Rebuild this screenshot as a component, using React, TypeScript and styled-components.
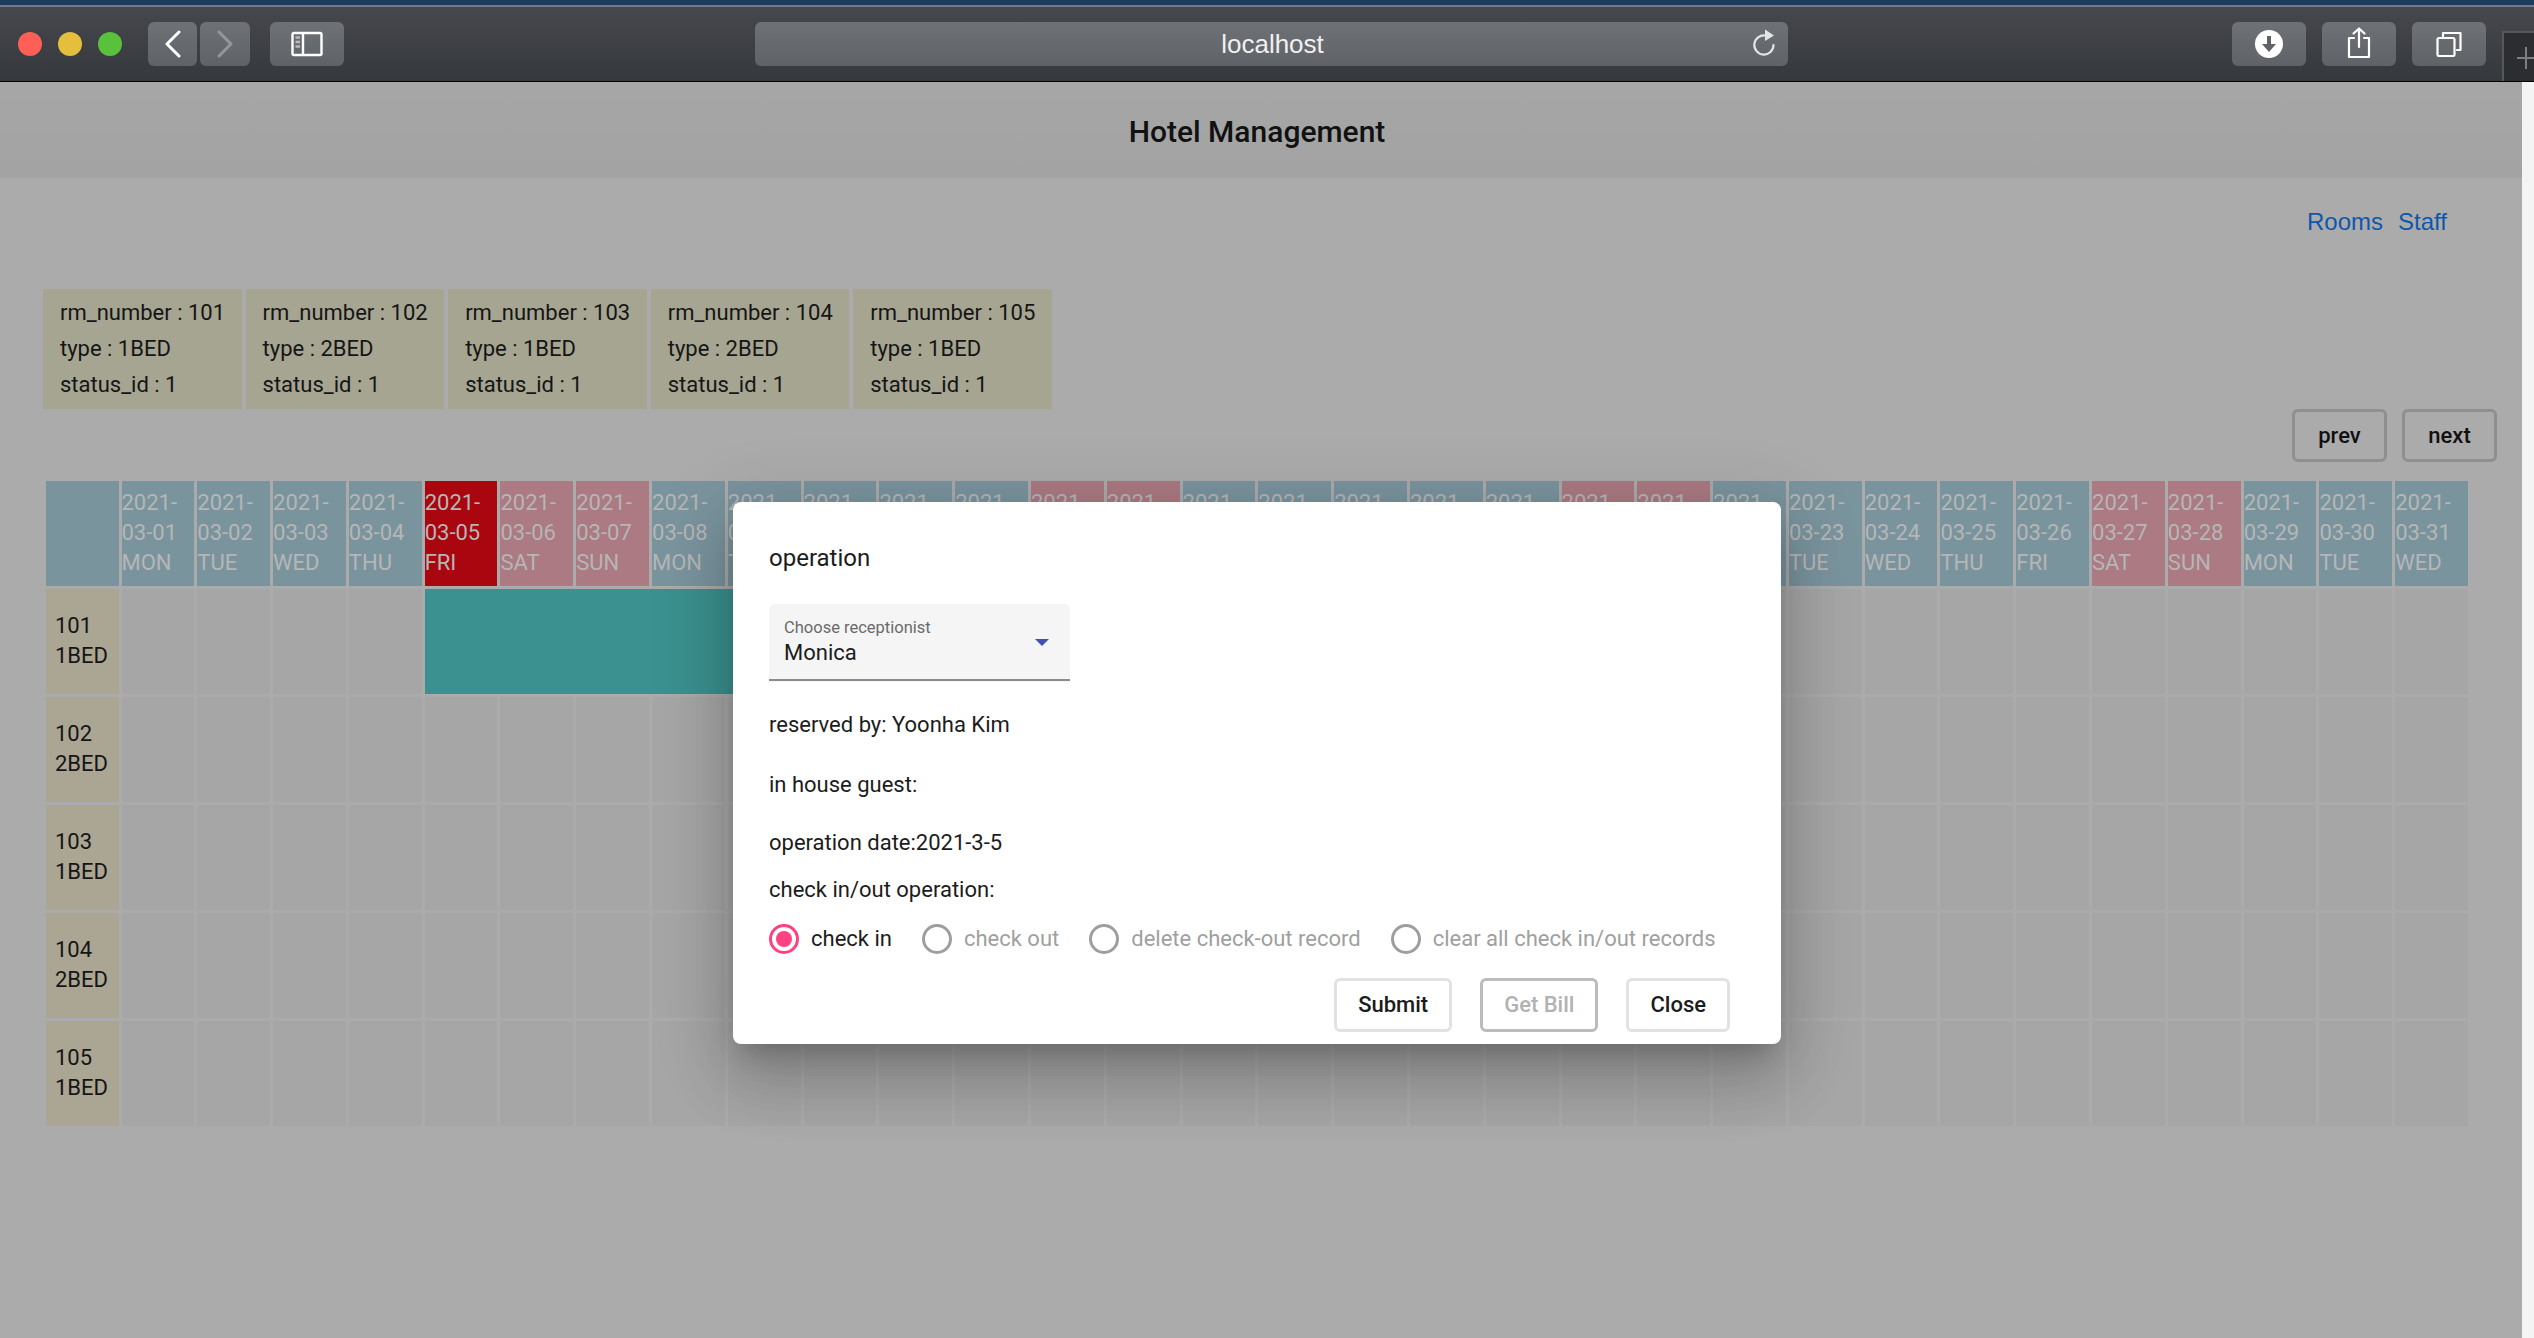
import styled, { createGlobalStyle } from 'styled-components';

const GlobalStyle = createGlobalStyle`
    html, body {
        margin: 0;
        padding: 0;
        background: #f4f4f4;
        overflow: hidden;
    }
    * {
        box-sizing: border-box;
    }
`;

const rooms = [
    { number: 101, type: '1BED' },
    { number: 102, type: '2BED' },
    { number: 103, type: '1BED' },
    { number: 104, type: '2BED' },
    { number: 105, type: '1BED' },
];

const weekdays = ['MON', 'TUE', 'WED', 'THU', 'FRI', 'SAT', 'SUN'];

const days = Array.from({ length: 31 }, (_, i) => {
    const day = i + 1;
    const name = weekdays[i % 7];
    return {
        date: `03-${String(day).padStart(2, '0')}`,
        name,
        kind: day === 5 ? 'today' : name === 'SAT' || name === 'SUN' ? 'weekend' : 'weekday',
    };
});

const radios = [
    { label: 'check in', checked: true },
    { label: 'check out', checked: false },
    { label: 'delete check-out record', checked: false },
    { label: 'clear all check in/out records', checked: false },
];

const dayColors: Record<string, string> = {
    today: '#aa0610',
    weekend: '#ab7a82',
    weekday: '#7a949e',
};

export default function App() {
    return (
        <Page>
            <GlobalStyle />
            <TopStrip />
            <Toolbar>
                <Lights>
                    <Light $color="#ff5f57" />
                    <Light $color="#e5bf3c" />
                    <Light $color="#5ac13c" />
                </Lights>
                <NavGroup>
                    <ToolButton $width={49}>
                        <svg width="20" height="28" viewBox="0 0 20 28" fill="none" stroke="#fff" strokeWidth="3" strokeLinecap="round" strokeLinejoin="round">
                            <path d="M16 2 L4 14 L16 26" />
                        </svg>
                    </ToolButton>
                    <ToolButton $width={50}>
                        <svg width="20" height="28" viewBox="0 0 20 28" fill="none" stroke="#94969a" strokeWidth="3" strokeLinecap="round" strokeLinejoin="round">
                            <path d="M4 2 L16 14 L4 26" />
                        </svg>
                    </ToolButton>
                </NavGroup>
                <ToolButton $width={74}>
                    <svg width="32" height="26" viewBox="0 0 32 26" fill="none" stroke="#fff" strokeWidth="2.4">
                        <rect x="1.5" y="2" width="29" height="22" rx="1.5" />
                        <path d="M12 2 V24" />
                        <path d="M4.5 6.5 H9 M4.5 11 H9 M4.5 15.5 H9" stroke="#b8babd" strokeWidth="2.4" />
                    </svg>
                </ToolButton>
                <UrlBar>
                    <UrlText>localhost</UrlText>
                    <ReloadIcon viewBox="0 0 24 28" fill="none">
                        <path d="M13.5 6.5 A9.6 9.6 0 1 0 21.5 16" stroke="#e4e4e4" strokeWidth="2.2" strokeLinecap="round" />
                        <path d="M13 0.5 L22 6.5 L13 12 Z" fill="#e4e4e4" />
                    </ReloadIcon>
                </UrlBar>
                <ToolButton $width={74}>
                    <svg width="28" height="28" viewBox="0 0 28 28">
                        <circle cx="14" cy="14" r="14" fill="#fff" />
                        <path d="M12 6 H16 V14 H21 L14 22 L7 14 H12 Z" fill="#5f6267" />
                    </svg>
                </ToolButton>
                <ShareButton $width={74}>
                    <svg width="24" height="32" viewBox="0 0 24 32" fill="none" stroke="#fff" strokeWidth="2.2" strokeLinecap="round" strokeLinejoin="round">
                        <path d="M7 11 H2 V30 H22 V11 H17" />
                        <path d="M12 20 V2 M6.5 6.5 L12 1.5 L17.5 6.5" />
                    </svg>
                </ShareButton>
                <ToolButton $width={74}>
                    <svg width="26" height="26" viewBox="0 0 26 26" fill="none" stroke="#fff" strokeWidth="2.2" strokeLinecap="round" strokeLinejoin="round">
                        <rect x="1.5" y="7" width="17" height="18" rx="1.5" />
                        <path d="M7 7 V2 H24.5 V19 H21" />
                    </svg>
                </ToolButton>
                <NewTab>
                    <svg width="18" height="22" viewBox="0 0 18 22" stroke="#7d7f83" strokeWidth="2">
                        <path d="M0 11 H18 M9 0 V22" />
                    </svg>
                </NewTab>
            </Toolbar>
            <Body>
                <Main>
                    <Header>
                        <Title>Hotel Management</Title>
                    </Header>
                    <Links>
                        <Link>Rooms</Link>
                        <Link>Staff</Link>
                    </Links>
                    <Cards>
                        {rooms.map((room) => (
                            <Card key={room.number}>
                                <div>{`rm_number : ${room.number}`}</div>
                                <div>{`type : ${room.type}`}</div>
                                <div>status_id : 1</div>
                            </Card>
                        ))}
                    </Cards>
                    <Pager>
                        <PagerButton>prev</PagerButton>
                        <PagerButton>next</PagerButton>
                    </Pager>
                    <Calendar>
                        <CornerCell />
                        {days.map((day) => (
                            <DayCell key={day.date} $color={dayColors[day.kind]}>
                                2021-
                                <br />
                                {day.date}
                                <br />
                                {day.name}
                            </DayCell>
                        ))}
                        {rooms.map((room, r) => (
                            <CalendarRow key={room.number}>
                                <RoomCell>
                                    {room.number}
                                    <br />
                                    {room.type}
                                </RoomCell>
                                {r === 0
                                    ? days.filter((_, i) => i < 4 || i > 11).map((day) => <EmptyCell key={day.date} />)
                                    : days.map((day) => <EmptyCell key={day.date} />)}
                                {r === 0 && <Booking />}
                            </CalendarRow>
                        ))}
                    </Calendar>
                    <Dialog>
                        <DialogTitle>operation</DialogTitle>
                        <SelectField>
                            <SelectLabel>Choose receptionist</SelectLabel>
                            <SelectValue>Monica</SelectValue>
                            <SelectArrow />
                        </SelectField>
                        <DialogLine $top={27}>reserved by: Yoonha Kim</DialogLine>
                        <DialogLine $top={28}>in house guest:</DialogLine>
                        <DialogLine $top={26}>operation date:2021-3-5</DialogLine>
                        <DialogLine $top={15}>check in/out operation:</DialogLine>
                        <RadioRow>
                            {radios.map((radio) => (
                                <RadioItem key={radio.label} $checked={radio.checked}>
                                    <RadioCircle $checked={radio.checked} />
                                    {radio.label}
                                </RadioItem>
                            ))}
                        </RadioRow>
                        <DialogActions>
                            <DialogButton>Submit</DialogButton>
                            <DialogButton $disabled>Get Bill</DialogButton>
                            <DialogButton>Close</DialogButton>
                        </DialogActions>
                    </Dialog>
                </Main>
                <Scrollbar />
            </Body>
        </Page>
    );
}

const Page = styled.div`
    width: 2534px;
    height: 1338px;
    display: flex;
    flex-direction: column;
    font-family: Roboto, "Liberation Sans", sans-serif;
    overflow: hidden;
`;

const TopStrip = styled.div`
    height: 7px;
    flex: none;
    background: #1e3a5f;
    border-bottom: 2px solid #77797c;
`;

const Toolbar = styled.div`
    height: 75px;
    flex: none;
    display: flex;
    align-items: flex-start;
    padding: 15px 0 0 18px;
    background: linear-gradient(#46484e, #35383d);
    border-bottom: 1px solid #000;
    position: relative;
`;

const Lights = styled.div`
    display: flex;
    gap: 16px;
    margin: 10px 26px 0 0;
`;

const Light = styled.span<{ $color: string }>`
    width: 24px;
    height: 24px;
    border-radius: 50%;
    background: ${props => props.$color};
`;

const NavGroup = styled.div`
    display: flex;
    gap: 3px;
    margin-right: 20px;
`;

const ToolButton = styled.div<{ $width: number }>`
    width: ${props => props.$width}px;
    height: 44px;
    border-radius: 6px;
    background: linear-gradient(#6e7176, #5f6267);
    display: flex;
    align-items: center;
    justify-content: center;
    flex: none;
`;

const ShareButton = styled(ToolButton)`
    margin: 0 16px 0 16px;

    svg {
        margin-top: -2px;
    }
`;

const UrlBar = styled.div`
    width: 1033px;
    height: 44px;
    margin: 0 444px 0 411px;
    border-radius: 6px;
    background: linear-gradient(#6e7176, #5f6267);
    display: flex;
    align-items: center;
    justify-content: center;
    position: relative;
    flex: none;
`;

const UrlText = styled.span`
    font-family: "Liberation Sans", Arial, sans-serif;
    font-size: 26px;
    padding-left: 2px;
    color: #f0f0f0;
`;

const ReloadIcon = styled.svg`
    position: absolute;
    right: 12px;
    top: 7px;
    width: 24px;
    height: 28px;
`;

const NewTab = styled.div`
    position: absolute;
    left: 2502px;
    top: 24px;
    width: 32px;
    height: 50px;
    background: #2b2d31;
    border: 2px solid #55575b;
    border-width: 2px 0 0 2px;
    padding: 14px 0 0 13px;
`;

const Body = styled.div`
    flex: 1;
    display: flex;
    min-height: 0;
`;

const Main = styled.main`
    width: 2522px;
    flex: none;
    background: #ababab;
    color: #111;
    position: relative;
    overflow: hidden;
`;

const Scrollbar = styled.div`
    flex: 1;
    background: #f4f4f4;
`;

const Header = styled.header`
    height: 96px;
    background: linear-gradient(#a6a6a6, #a3a3a3);
    display: flex;
    align-items: center;
    justify-content: center;
    padding: 3px 8px 0 0;
`;

const Title = styled.h1`
    margin: 0;
    font-size: 30px;
    font-weight: 500;
    color: #111;
`;

const Links = styled.nav`
    height: 111px;
    display: flex;
    justify-content: flex-end;
    gap: 15px;
    padding: 29px 75px 0 0;
`;

const Link = styled.a`
    font-family: "Liberation Sans", Arial, sans-serif;
    font-size: 24px;
    line-height: 30px;
    color: #0f57ab;
`;

const Cards = styled.div`
    display: flex;
    gap: 4px;
    padding-left: 43px;
`;

const Card = styled.div`
    height: 120px;
    padding: 6px 16.5px 6px 17px;
    background: #a5a592;
    font-size: 22px;
    line-height: 36px;
    color: #151515;
    white-space: nowrap;
`;

const Pager = styled.div`
    display: flex;
    justify-content: flex-end;
    gap: 15px;
    padding-right: 25px;
`;

const PagerButton = styled.div`
    width: 95px;
    height: 53px;
    border: 3px solid #8f8f8f;
    border-radius: 6px;
    display: flex;
    align-items: center;
    justify-content: center;
    font-size: 22px;
    font-weight: 500;
    color: #111;
`;

const Calendar = styled.div`
    margin: 19px 0 0 46px;
    width: 2422px;
    display: grid;
    grid-template-columns: 72.5px repeat(31, 1fr);
    grid-auto-rows: 105px;
    gap: 3px;
    font-size: 22px;
    line-height: 30px;
`;

const CornerCell = styled.div`
    background: #7a949e;
`;

const DayCell = styled.div<{ $color: string }>`
    background: ${props => props.$color};
    color: #b6b6b6;
    padding-top: 7px;
    white-space: nowrap;
    overflow: hidden;
`;

const CalendarRow = styled.div`
    display: contents;
`;

const RoomCell = styled.div`
    background: #aba594;
    color: #151515;
    padding: 22px 0 0 9px;
`;

const EmptyCell = styled.div`
    background: #a6a6a6;
`;

const Booking = styled.div`
    grid-row: 2;
    grid-column: 6 / span 8;
    background: #3b918f;
`;

const Dialog = styled.div`
    position: absolute;
    left: 733px;
    top: 420px;
    width: 1048px;
    height: 542px;
    padding: 40px 36px 12px;
    background: #fff;
    border-radius: 8px;
    color: #1c1c1c;
    font-size: 22px;
    line-height: 32px;
    box-shadow: 0 18px 24px -11px rgba(0, 0, 0, 0.2), 0 38px 61px 5px rgba(0, 0, 0, 0.14), 0 14px 74px 13px rgba(0, 0, 0, 0.12);
    display: flex;
    flex-direction: column;
`;

const DialogTitle = styled.h2`
    margin: 0 0 30px;
    font-size: 24px;
    font-weight: 400;
    line-height: 32px;
`;

const SelectField = styled.div`
    width: 301px;
    height: 78px;
    flex: none;
    padding: 12px 15px 0;
    background: #f5f5f5;
    border-radius: 6px 6px 0 0;
    position: relative;

    &::after {
        content: '';
        position: absolute;
        left: 0;
        right: 0;
        bottom: 1px;
        height: 2px;
        background: #8b8b8b;
    }
`;

const SelectLabel = styled.div`
    font-size: 16.5px;
    line-height: 23px;
    color: #6a6a6a;
`;

const SelectValue = styled.div`
    font-size: 22px;
    line-height: 28px;
    color: #1c1c1c;
`;

const SelectArrow = styled.span`
    position: absolute;
    left: 266px;
    top: 35px;
    border-style: solid;
    border-width: 7px 7.5px 0;
    border-color: #3f51b5 transparent transparent;
`;

const DialogLine = styled.p<{ $top: number }>`
    margin: ${props => props.$top}px 0 0;
`;

const RadioRow = styled.div`
    display: flex;
    gap: 30px;
    margin-top: 18px;
`;

const RadioItem = styled.label<{ $checked: boolean }>`
    display: flex;
    align-items: center;
    gap: 12px;
    height: 30px;
    white-space: nowrap;
    color: ${props => (props.$checked ? '#1c1c1c' : '#a0a0a0')};
`;

const RadioCircle = styled.span<{ $checked: boolean }>`
    width: 30px;
    height: 30px;
    flex: none;
    border-radius: 50%;
    border: 3px solid ${props => (props.$checked ? '#ff4081' : '#9e9e9e')};
    display: flex;
    align-items: center;
    justify-content: center;

    &::after {
        content: '';
        width: 16px;
        height: 16px;
        border-radius: 50%;
        background: ${props => (props.$checked ? '#ff4081' : 'transparent')};
    }
`;

const DialogActions = styled.div`
    display: flex;
    justify-content: flex-end;
    gap: 28px;
    margin-top: 24px;
    padding-right: 15px;
`;

const DialogButton = styled.div<{ $disabled?: boolean }>`
    height: 54px;
    padding: 0 21px;
    border: 3px solid ${props => (props.$disabled ? '#bcbcbc' : '#e2e2e2')};
    border-radius: 6px;
    display: flex;
    align-items: center;
    justify-content: center;
    font-size: 22px;
    font-weight: 500;
    color: ${props => (props.$disabled ? '#b2b2b2' : '#1c1c1c')};
`;
